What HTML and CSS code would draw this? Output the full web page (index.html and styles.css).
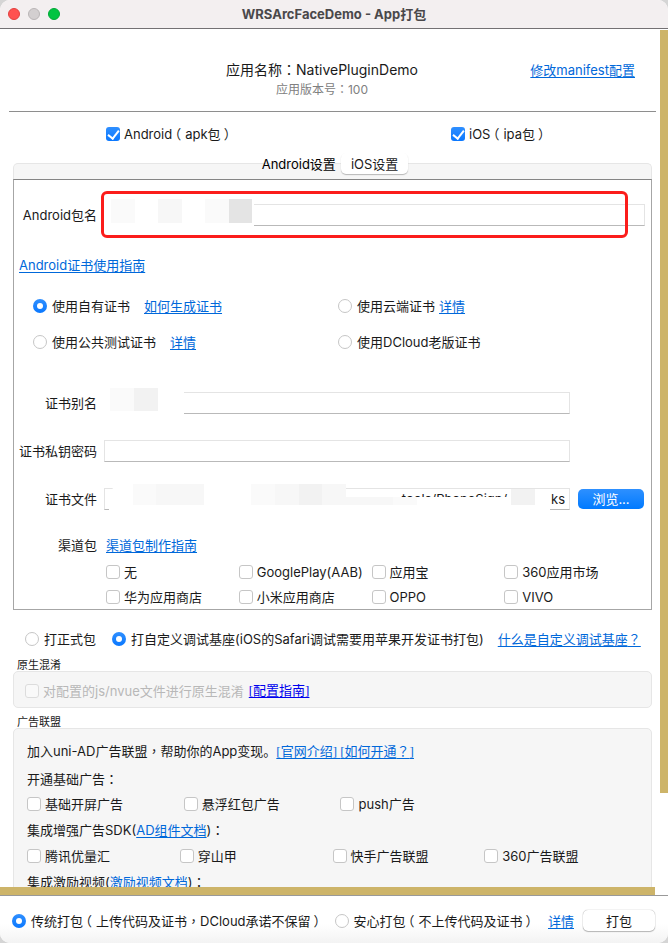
FILE: index.html
```html
<!DOCTYPE html>
<html lang="zh-CN">
<head>
<meta charset="utf-8">
<title>WRSArcFaceDemo - App打包</title>
<link rel="stylesheet" href="styles.css">
</head>
<body>
<div class="window">
  <header class="titlebar">
    <div class="lights"><i class="light close"></i><i class="light min"></i><i class="light max"></i></div>
    <h1>WRSArcFaceDemo - App打包</h1>
  </header>

  <div class="viewport">
    <main class="content">
      <section class="app-head">
        <div class="app-info">
          <div class="app-name">应用名称<span class="p" lang="zh-TW">：</span>NativePluginDemo</div>
          <div class="app-version">应用版本号<span class="p" lang="zh-TW">：</span>100</div>
        </div>
        <div class="app-link"><a href="#">修改manifest配置</a></div>
      </section>

      <div class="platforms">
        <label class="opt"><input type="checkbox" checked><span>Android<span class="po">（</span>apk包<span class="pc">）</span></span></label>
        <label class="opt"><input type="checkbox" checked><span>iOS<span class="po">（</span>ipa包<span class="pc">）</span></span></label>
      </div>

      <div class="tabs">
        <button class="tab active" type="button">Android设置</button>
        <button class="tab" type="button">iOS设置</button>
      </div>

      <section class="panel">
        <div class="field wide">
          <label for="pkg">Android包名</label>
          <div class="box">
            <input id="pkg" type="text">
            <div class="mask mask-pkg"><i class="a"></i><i></i><i class="b"></i><i></i><i class="a"></i><i class="d"></i></div>
            <div class="highlight"></div>
          </div>
        </div>

        <div class="guide"><a href="#">Android证书使用指南</a></div>

        <div class="certs">
          <div class="cert"><label class="opt radio"><input type="radio" name="cert" checked><span>使用自有证书</span></label><a class="far" href="#">如何生成证书</a></div>
          <div class="cert"><label class="opt radio"><input type="radio" name="cert"><span>使用云端证书</span></label><a href="#">详情</a></div>
          <div class="cert"><label class="opt radio"><input type="radio" name="cert"><span>使用公共测试证书</span></label><a class="far" href="#">详情</a></div>
          <div class="cert"><label class="opt radio"><input type="radio" name="cert"><span>使用DCloud老版证书</span></label></div>
        </div>

        <div class="fields">
          <div class="field">
            <label for="alias">证书别名</label>
            <div class="box">
              <input id="alias" type="text">
              <div class="mask mask-alias"><i class="a"></i><i class="c"></i></div>
            </div>
          </div>
          <div class="field">
            <label for="pwd">证书私钥密码</label>
            <div class="box"><input id="pwd" type="password"></div>
          </div>
          <div class="field">
            <label for="file">证书文件</label>
            <div class="box">
              <input id="file" class="file" type="text" value="tools/PhoneSign/            ks">
              <div class="mask mask-file"><i></i><i class="a"></i><i class="b"></i><i class="b"></i><i></i><i></i><i class="a"></i><i class="b"></i><i class="c"></i><i class="b"></i></div>
              <div class="mask mask-under"><i class="b"></i><i class="b"></i><i class="a"></i></div>
              <div class="mask mask-tail"><i class="c"></i></div>
            </div>
            <button class="browse" type="button">浏览...</button>
          </div>
        </div>

        <div class="field channel">
          <span class="name">渠道包</span>
          <div class="box"><a href="#">渠道包制作指南</a></div>
        </div>
        <div class="channels">
          <label class="opt"><input type="checkbox"><span>无</span></label>
          <label class="opt"><input type="checkbox"><span>GooglePlay(AAB)</span></label>
          <label class="opt"><input type="checkbox"><span>应用宝</span></label>
          <label class="opt"><input type="checkbox"><span>360应用市场</span></label>
          <label class="opt"><input type="checkbox"><span>华为应用商店</span></label>
          <label class="opt"><input type="checkbox"><span>小米应用商店</span></label>
          <label class="opt"><input type="checkbox"><span>OPPO</span></label>
          <label class="opt"><input type="checkbox"><span>VIVO</span></label>
        </div>
      </section>

      <div class="build">
        <label class="opt radio"><input type="radio" name="build"><span>打正式包</span></label>
        <label class="opt radio"><input type="radio" name="build" checked><span>打自定义调试基座(iOS的Safari调试需要用苹果开发证书打包)</span></label>
        <a href="#">什么是自定义调试基座<span class="p" lang="zh-TW">？</span></a>
      </div>

      <h2>原生混淆</h2>
      <section class="group obf">
        <label class="opt disabled"><input type="checkbox" disabled><span>对配置的js/nvue文件进行原生混淆</span></label>
        <a class="raw" href="#">[配置指南]</a>
      </section>

      <h2>广告联盟</h2>
      <section class="group ads">
        <div class="line">加入uni-AD广告联盟<span class="p" lang="zh-TW">，</span>帮助你的App变现。<a class="bracket" href="#">[官网介绍]&nbsp;</a><a class="bracket" href="#">[如何开通<span class="p" lang="zh-TW">？</span>]</a></div>
        <div class="line">开通基础广告<span class="p" lang="zh-TW">：</span></div>
        <div class="three">
          <label class="opt"><input type="checkbox"><span>基础开屏广告</span></label>
          <label class="opt"><input type="checkbox"><span>悬浮红包广告</span></label>
          <label class="opt"><input type="checkbox"><span>push广告</span></label>
        </div>
        <div class="line">集成增强广告SDK(<a href="#">AD组件文档</a>)<span class="p" lang="zh-TW">：</span></div>
        <div class="four">
          <label class="opt"><input type="checkbox"><span>腾讯优量汇</span></label>
          <label class="opt"><input type="checkbox"><span>穿山甲</span></label>
          <label class="opt"><input type="checkbox"><span>快手广告联盟</span></label>
          <label class="opt"><input type="checkbox"><span>360广告联盟</span></label>
        </div>
        <div class="line">集成激励视频(<a href="#">激励视频文档</a>)<span class="p" lang="zh-TW">：</span></div>
      </section>
    </main>
    <div class="vbar"></div>
    <div class="hbar"></div>
  </div>

  <footer class="bottom">
    <label class="opt radio"><input type="radio" name="mode" checked><span>传统打包<span class="po">（</span>上传代码及证书<span class="p" lang="zh-TW">，</span>DCloud承诺不保留<span class="pc">）</span></span></label>
    <label class="opt radio"><input type="radio" name="mode"><span>安心打包<span class="po">（</span>不上传代码及证书<span class="pc">）</span></span></label>
    <a href="#">详情</a>
    <button class="pack" type="button">打包</button>
  </footer>
</div>
</body>
</html>
```
FILE: styles.css
```css
* { box-sizing: border-box; }

body {
  margin: 0;
  background: #d5d5d5;
  color: #1a1a1a;
  font: 13px/20px Inter, "Noto Sans CJK SC", sans-serif;
}

button, input { font: inherit; color: inherit; }
a { color: #0068da; text-underline-offset: 2px; text-decoration-thickness: 1px; }

/* Centred full-width punctuation */
.p { font-family: "Noto Sans CJK TC", sans-serif; line-height: 1; }
.po { margin: 0 4px 0 -4px; }
.pc { margin: 0 -4px 0 3px; }

.window {
  display: flex;
  flex-direction: column;
  height: 100vh;
  overflow: hidden;
  background: #fff;
  border-radius: 10px;
}

/* Title bar */
.titlebar {
  display: grid;
  grid-template-columns: 1fr auto 1fr;
  align-items: center;
  height: 29px;
  padding: 0 8px;
  background: #f3eff0;
  border-bottom: 1px solid #737073;
}
.titlebar h1 { margin: 0; font-size: 13px; font-weight: 700; color: #4a484a; }
.lights { display: flex; gap: 8px; }
.light { width: 12px; height: 12px; border-radius: 50%; border: 1px solid; }
.close { background: #ff5150; border-color: #e2403f; }
.min { background: #d3cfd0; border-color: #b9b5b6; }
.max { background: #00c441; border-color: #00a936; }

/* Scrolling area */
.viewport {
  display: grid;
  grid-template-columns: minmax(0, 1fr) 8px;
  grid-template-rows: minmax(0, 1fr) 8px;
  flex: 1;
  min-height: 0;
}
.content { overflow: hidden; padding: 0 8px 0 13px; }
.vbar { margin: 1px 0 94px; background: #cdb469; }
.hbar { margin-right: 5px; background: #cdb469; }

.app-head {
  display: grid;
  grid-template-columns: 1fr auto 1fr;
  margin: 0 -4px;
  padding: 31px 21px 11px 0;
  border-bottom: 1px solid #8e8e8e;
}
.app-info { grid-column: 2; text-align: center; }
.app-name { height: 20px; font-size: 14px; }
.app-version { height: 20px; font-size: 12px; color: #808080; }
.app-link { text-align: right; }

.opt { display: inline-flex; align-items: center; gap: 4px; white-space: nowrap; }
.opt.radio { gap: 5px; }

input[type="checkbox"], input[type="radio"] {
  appearance: none;
  display: grid;
  place-items: center;
  flex: none;
  width: 14px;
  height: 14px;
  margin: 0;
  background: #fff;
  border: 1px solid #c6c6c6;
  border-radius: 3px;
}
input[type="radio"] { border-radius: 50%; }
input[type="checkbox"]:checked, input[type="radio"]:checked { border: 0; background: linear-gradient(#2f8fff, #0a78ff); }
input[type="checkbox"]:checked::before {
  content: "";
  width: 5px;
  height: 9px;
  margin-bottom: 2px;
  border: solid #fff;
  border-width: 0 2px 2px 0;
  transform: rotate(38deg);
}
input[type="radio"]:checked::before {
  content: "";
  width: 6px;
  height: 6px;
  border-radius: 50%;
  background: #fff;
}

.platforms {
  display: grid;
  grid-template-columns: 345fr 201fr;
  height: 41px;
  padding: 3px 0 0 93px;
}

/* Tabs */
.tabs { position: relative; display: flex; justify-content: center; height: 26px; }
.tabs::before {
  content: "";
  position: absolute;
  inset: 10px 0 0;
  background: #f6f6f6;
  border: 1px solid #e6e6e6;
  border-bottom: 0;
  border-radius: 5px 5px 0 0;
}
.tab {
  position: relative;
  height: 21px;
  padding: 0 10px;
  border: 0;
  border-radius: 5px;
  background: #fff;
  box-shadow: 0 1px 1px #b8b8b8;
  line-height: 20px;
}
.tab.active { padding: 0 5px; background: none; box-shadow: none; color: #000; }

/* Settings panel */
.panel { padding: 24px 0 0; border: 1px solid #a6a6a6; border-top-color: #858585; }

.field {
  display: grid;
  grid-template-columns: 83px minmax(0, 1fr) 67px;
  column-gap: 7px;
  align-items: center;
  min-height: 22px;
  padding-right: 7px;
}
.field.wide { grid-template-columns: 83px minmax(0, 1fr); padding-right: 6px; }
.field > label, .field > .name { text-align: right; white-space: nowrap; }
.box { position: relative; }
.box input {
  display: block;
  width: 100%;
  height: 22px;
  padding: 0 4px;
  border: 1px solid #e4e4e4;
  border-bottom-color: #b9b9b9;
  background: #fff;
  outline: 0;
}
.box .file { text-align: right; }

.highlight { position: absolute; inset: -13px 17px -12px -3px; border: 3px solid #fb1d1b; border-radius: 6px; }

/* Blurred-out values */
.mask { position: absolute; display: flex; background: #fff; }
.mask i { flex: 1; }
.mask .a { background: #fafafa; }
.mask .b { background: #f7f7f7; }
.mask .c { background: #f2f2f2; }
.mask .d { background: #e4e4e4; }
.mask-pkg { left: -1px; top: -5px; width: 151px; height: 28px; padding: 0 2px 4px 8px; }
.mask-alias { left: -6px; top: -4px; width: 86px; height: 27px; padding: 0 26px 4px 12px; border-radius: 10px 0 0; }
.mask-file { left: 5px; top: -4px; width: 237px; height: 27px; padding: 0 0 6px; border-radius: 14px 0 0; }
.mask-under { left: 242px; right: 20px; top: 9px; height: 14px; padding: 0 133px 6px 0; }
.mask-tail { right: 20px; top: 1px; width: 39px; height: 16px; padding-right: 15px; }

.guide { margin: 29px 0 0 5px; }
.certs {
  display: grid;
  grid-template-columns: 305fr 313fr;
  row-gap: 16px;
  padding: 21px 0 40px 19px;
}
.cert { display: flex; align-items: center; gap: 4px; }
.cert .far { margin-left: 10px; }

.fields { display: grid; row-gap: 26px; }
.browse {
  justify-self: end;
  width: 66px;
  height: 20px;
  padding: 0;
  border: 0;
  border-radius: 5px;
  background: linear-gradient(#2e90ff, #007aff);
  color: #fff;
  line-height: 18px;
}
.channel { margin-top: 24px; }
.channel .box { padding-left: 2px; }
.channels {
  display: grid;
  grid-template-columns: repeat(3, 133fr) 147fr;
  grid-auto-rows: 24px;
  row-gap: 1px;
  margin-top: 4px;
  padding-left: 92px;
}

.build { display: flex; align-items: center; gap: 16px; height: 49px; padding: 8px 12px 0; white-space: nowrap; }
.build a { margin-left: -2px; }

h2 { margin: 0 0 0 4px; font-size: 11px; line-height: 12px; font-weight: 400; }
.group { background: #f6f6f6; border: 1px solid #e6e6e6; border-radius: 5px; }
.obf { display: flex; align-items: center; gap: 5px; height: 37px; margin-bottom: 8px; padding: 2px 11px 0; }
.disabled { color: #b8b8b8; }
.disabled input { background: #f9f9f9; border-color: #dcdcdc; }
.raw, .bracket { font-family: "Liberation Serif", "Noto Sans CJK SC", serif; }
.raw { color: #0000ee; }

.ads { padding: 12px 0 30px 13px; }
.ads > * { height: 20px; margin-bottom: 6px; }
.ads > :first-child { margin-bottom: 8px; }
.three, .four { display: grid; }
.three { grid-template-columns: 157fr 157fr 311fr; margin-top: -1px; }
.four { grid-template-columns: 153fr 153fr 152fr 167fr; }

/* Bottom bar */
.bottom {
  display: flex;
  align-items: center;
  height: 48px;
  padding: 2px 13px 0 12px;
  border-top: 1px solid #999;
  background: linear-gradient(#fff 60%, #f3f3f3);
  white-space: nowrap;
}
.bottom .opt + .opt { margin-left: 12px; }
.bottom a { margin-left: auto; }
.pack {
  width: 72px;
  height: 21px;
  margin-left: 9px;
  padding: 0;
  border: 0;
  border-radius: 5px;
  background: #fff;
  box-shadow: 0 0 1px #888, 0 1px 1px #bbb;
  line-height: 20px;
}
```
